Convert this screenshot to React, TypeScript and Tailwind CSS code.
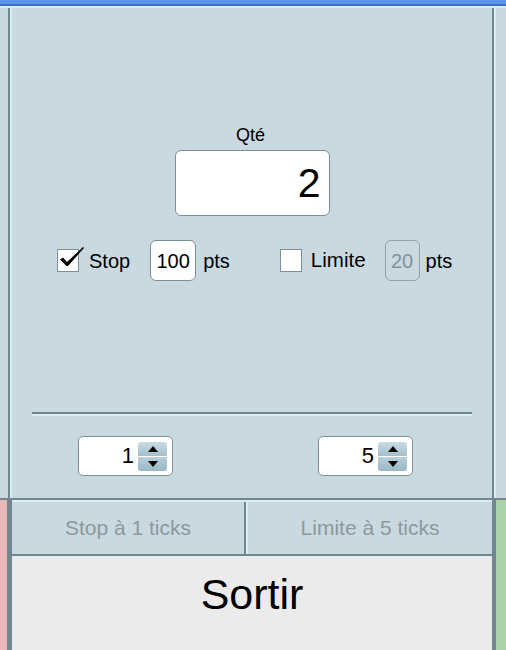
const dark = 'bg-[#71868f]';
const light = 'bg-[#dcecf4]';

function CheckBox({ checked }: { checked?: boolean }) {
  return (
    <div className="relative w-[22px] h-[23px] bg-white border border-[#7d8f96] shrink-0">
      {checked && (
        <svg
          className="absolute left-[1px] top-[-3px] overflow-visible"
          width="26"
          height="22"
          viewBox="0 0 26 22"
        >
          <path d="M1 12.5 L4 10.5 L8 15 L24 0 L25 1 L9 19 L7.5 19 Z" fill="#000" />
        </svg>
      )}
    </div>
  );
}

function Spinner({ value }: { value: string }) {
  return (
    <div className="w-[95px] h-[40px] bg-white border border-[#7d8f96] rounded-[5px] flex items-center justify-end pr-[5px] gap-[4px]">
      <span className="text-[22px] leading-none text-black">{value}</span>
      <div className="flex flex-col gap-px">
        <div className="w-[29px] h-[14px] rounded-t-[3px] bg-linear-to-b from-[#cadce4] to-[#a2bfcc] flex items-center justify-center">
          <svg width="10" height="6" viewBox="0 0 10 6">
            <path d="M5 0 L10 6 L0 6 Z" fill="#000" />
          </svg>
        </div>
        <div className="w-[29px] h-[14px] rounded-b-[3px] bg-linear-to-b from-[#b9d0da] to-[#98b7c5] flex items-center justify-center">
          <svg width="10" height="6" viewBox="0 0 10 6">
            <path d="M0 0 L10 0 L5 6 Z" fill="#000" />
          </svg>
        </div>
      </div>
    </div>
  );
}

export default function App() {
  return (
    <div className="w-[506px] h-[650px] flex flex-col bg-[#cad9e0] font-['Liberation_Sans',Arial,sans-serif] overflow-hidden">
      <div className="h-[4px] bg-[#5a92ea]" />
      <div className="h-[2px] bg-[#3b6fc9]" />
      <div className={`h-[2px] ${light}`} />

      {/* order panel */}
      <div className="h-[490px] flex pl-[8px] pr-[10px]">
        <div className="flex-1 flex border-r-2 border-[#dcecf4]">
          <div className="flex-1 flex border-x-2 border-[#71868f]">
            <div className="flex-1 flex flex-col border-l-2 border-[#dcecf4] pt-[117px]">
              <div className="text-[18px] leading-[21px] text-center text-black pr-[3px]">Qté</div>
              <div className="mt-[4px] mx-auto w-[155px] h-[66px] bg-white border border-[#7d8f96] rounded-[6px] flex items-center justify-end pr-[8px] text-[41px] leading-none text-black">
                2
              </div>

              <div className="mt-[24px] h-[41px] flex items-center pl-[45px] text-[20px] text-black">
                <CheckBox checked />
                <span className="ml-[10px]">Stop</span>
                <div className="ml-[20px] w-[46px] h-[41px] bg-white border border-[#7d8f96] rounded-[6px] flex items-center justify-center">
                  100
                </div>
                <span className="ml-[7px]">pts</span>

                <div className="ml-[50px]">
                  <CheckBox />
                </div>
                <span className="ml-[9px] text-[20.5px]">Limite</span>
                <div className="ml-[19px] w-[35px] h-[41px] border border-[#8fa2aa] rounded-[6px] flex items-center justify-center text-[#7f9299]">
                  20
                </div>
                <span className="ml-[6px]">pts</span>
              </div>

              <div className={`mt-[131px] mx-[20px] h-[2px] ${dark}`} />
              <div className={`mx-[20px] h-[2px] ${light}`} />

              <div className="mt-[20px] flex pl-[66px] gap-[145px]">
                <Spinner value="1" />
                <Spinner value="5" />
              </div>
            </div>
          </div>
        </div>
      </div>

      {/* bottom bar */}
      <div className={`h-[2px] ${dark}`} />
      <div className="h-[150px] flex">
        <div className="w-[7px] bg-[#e9b8b8]" />
        <div className={`w-[5px] ${dark}`} />
        <div className="flex-1 flex flex-col">
          <div className={`h-[2px] ${light}`} />
          <div className="h-[52px] flex text-[21px] text-[#8b989d]">
            <div className="w-[232px] flex items-center justify-center">Stop à 1 ticks</div>
            <div className={`w-[2px] ${dark}`} />
            <div className={`w-[2px] ${light}`} />
            <div className="flex-1 flex items-center justify-center">Limite à 5 ticks</div>
          </div>
          <div className={`h-[2px] ${dark}`} />
          <div className={`h-[1px] ${light}`} />
          <div className="flex-1 bg-[#ebebeb] flex items-center justify-center pb-[18px] text-[43px] text-black">
            Sortir
          </div>
        </div>
        <div className={`w-[4px] ${dark}`} />
        <div className="w-[10px] bg-[#acd2a9]" />
      </div>
    </div>
  );
}
